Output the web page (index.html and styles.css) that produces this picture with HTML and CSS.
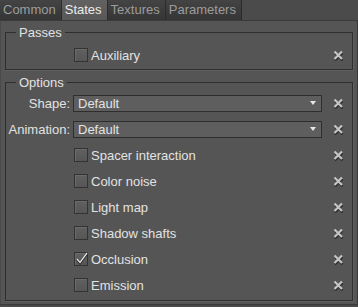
FILE: index.html
```html
<!DOCTYPE html>
<html lang="en">
<head>
  <meta charset="UTF-8">
  <title>States</title>
  <link rel="stylesheet" href="styles.css">
</head>
<body>

<div class="tabs">
  <div class="tab">Common</div>
  <div class="tab active">States</div>
  <div class="tab">Textures</div>
  <div class="tab">Parameters</div>
</div>

<div class="panel">
  <fieldset class="group passes">
    <legend>Passes</legend>
    <div class="rows">
      <span></span>
      <label class="check"><span class="box"></span>Auxiliary</label>
      <span class="reset"><svg width="11" height="11" viewBox="0 0 11 11"><path d="M2 3 L9.5 10.5 M9.5 3 L2 10.5" stroke="#2a2a2a" stroke-width="2"/><path d="M1.5 1.5 L9 9 M9 1.5 L1.5 9" stroke="#c4c4c4" stroke-width="2.2"/></svg></span>
    </div>
  </fieldset>

  <fieldset class="group options">
    <legend>Options</legend>
    <div class="rows">
      <span class="label">Shape:</span>
      <div class="combo">Default<svg class="arrow" width="6" height="4" viewBox="0 0 6 4"><path d="M0 0 H6 L3 4 Z" fill="#e8e8e8"/></svg></div>
      <span class="reset"><svg width="11" height="11" viewBox="0 0 11 11"><path d="M2 3 L9.5 10.5 M9.5 3 L2 10.5" stroke="#2a2a2a" stroke-width="2"/><path d="M1.5 1.5 L9 9 M9 1.5 L1.5 9" stroke="#c4c4c4" stroke-width="2.2"/></svg></span>

      <span class="label">Animation:</span>
      <div class="combo">Default<svg class="arrow" width="6" height="4" viewBox="0 0 6 4"><path d="M0 0 H6 L3 4 Z" fill="#e8e8e8"/></svg></div>
      <span class="reset"><svg width="11" height="11" viewBox="0 0 11 11"><path d="M2 3 L9.5 10.5 M9.5 3 L2 10.5" stroke="#2a2a2a" stroke-width="2"/><path d="M1.5 1.5 L9 9 M9 1.5 L1.5 9" stroke="#c4c4c4" stroke-width="2.2"/></svg></span>

      <span></span>
      <label class="check"><span class="box"></span>Spacer interaction</label>
      <span class="reset"><svg width="11" height="11" viewBox="0 0 11 11"><path d="M2 3 L9.5 10.5 M9.5 3 L2 10.5" stroke="#2a2a2a" stroke-width="2"/><path d="M1.5 1.5 L9 9 M9 1.5 L1.5 9" stroke="#c4c4c4" stroke-width="2.2"/></svg></span>

      <span></span>
      <label class="check"><span class="box"></span>Color noise</label>
      <span class="reset"><svg width="11" height="11" viewBox="0 0 11 11"><path d="M2 3 L9.5 10.5 M9.5 3 L2 10.5" stroke="#2a2a2a" stroke-width="2"/><path d="M1.5 1.5 L9 9 M9 1.5 L1.5 9" stroke="#c4c4c4" stroke-width="2.2"/></svg></span>

      <span></span>
      <label class="check"><span class="box"></span>Light map</label>
      <span class="reset"><svg width="11" height="11" viewBox="0 0 11 11"><path d="M2 3 L9.5 10.5 M9.5 3 L2 10.5" stroke="#2a2a2a" stroke-width="2"/><path d="M1.5 1.5 L9 9 M9 1.5 L1.5 9" stroke="#c4c4c4" stroke-width="2.2"/></svg></span>

      <span></span>
      <label class="check"><span class="box"></span>Shadow shafts</label>
      <span class="reset"><svg width="11" height="11" viewBox="0 0 11 11"><path d="M2 3 L9.5 10.5 M9.5 3 L2 10.5" stroke="#2a2a2a" stroke-width="2"/><path d="M1.5 1.5 L9 9 M9 1.5 L1.5 9" stroke="#c4c4c4" stroke-width="2.2"/></svg></span>

      <span></span>
      <label class="check"><span class="box"><svg width="14" height="14" viewBox="0 0 14 14"><path d="M2 7.5 L5 11 L12 1.5" fill="none" stroke="#2a2a2a" stroke-width="2.4"/><path d="M2 7 L5 10.5 L12 1" fill="none" stroke="#e4e4e4" stroke-width="1.3"/></svg></span>Occlusion</label>
      <span class="reset"><svg width="11" height="11" viewBox="0 0 11 11"><path d="M2 3 L9.5 10.5 M9.5 3 L2 10.5" stroke="#2a2a2a" stroke-width="2"/><path d="M1.5 1.5 L9 9 M9 1.5 L1.5 9" stroke="#c4c4c4" stroke-width="2.2"/></svg></span>

      <span></span>
      <label class="check"><span class="box"></span>Emission</label>
      <span class="reset"><svg width="11" height="11" viewBox="0 0 11 11"><path d="M2 3 L9.5 10.5 M9.5 3 L2 10.5" stroke="#2a2a2a" stroke-width="2"/><path d="M1.5 1.5 L9 9 M9 1.5 L1.5 9" stroke="#c4c4c4" stroke-width="2.2"/></svg></span>
    </div>
  </fieldset>
</div>

</body>
</html>
```

FILE: styles.css
```css
body {
  font-family: "Liberation Sans", Arial, sans-serif;
  font-size: 13px;
  background: #4b4b4b;
  color: #e2e2e2;
  margin: 0;
  width: 358px;
  height: 307px;
  overflow: hidden;
}

.tabs {
  display: flex;
  height: 20px;
  background: #4b4b4b;
}

.tab {
  padding: 0 5px 0 3px;
  line-height: 20px;
  color: #9c9c9c;
  background: linear-gradient(#444, #353535);
  border-right: 1px solid #2c2c2c;
}

.tab.active {
  color: #ececec;
  background: linear-gradient(#626262, #585858);
}

.panel {
  background: #555;
  border: 1px solid #3a3a3a;
  border-left-color: #4a4a4a;
  padding: 4px 4px 3px 4px;
}

.group {
  margin: 0;
  padding: 2px 0 1px 0;
  border: 1px solid #2f2f2f;
  box-shadow: 1px 1px 0 #606060;
  min-width: 0;
}

.group legend {
  margin-left: 10px;
  padding: 0 3px;
  line-height: 15px;
}

.options {
  margin-top: 5px;
  padding: 0 0 2px 0;
}

.rows {
  display: grid;
  grid-template-columns: 64px 1fr 27px;
  column-gap: 3px;
  grid-auto-rows: 26px;
  align-items: center;
}

.label {
  text-align: right;
}

.combo {
  height: 15px;
  line-height: 15px;
  padding-left: 4px;
  border: 1px solid #2e2e2e;
  background: #5e5e5e;
  display: flex;
  align-items: center;
  justify-content: space-between;
}

.combo .arrow {
  margin-right: 5px;
}

.check {
  display: flex;
  align-items: center;
  gap: 3px;
  margin-left: 1px;
}

.box {
  width: 12px;
  height: 12px;
  border: 1px solid #333;
  background: linear-gradient(#606060, #565656);
  box-shadow: inset 1px 1px 0 #6a6a6a;
  position: relative;
}

.box svg {
  position: absolute;
  left: 0;
  top: -1px;
}

.reset {
  justify-self: center;
  width: 11px;
  height: 11px;
}

.reset svg {
  display: block;
}
```
